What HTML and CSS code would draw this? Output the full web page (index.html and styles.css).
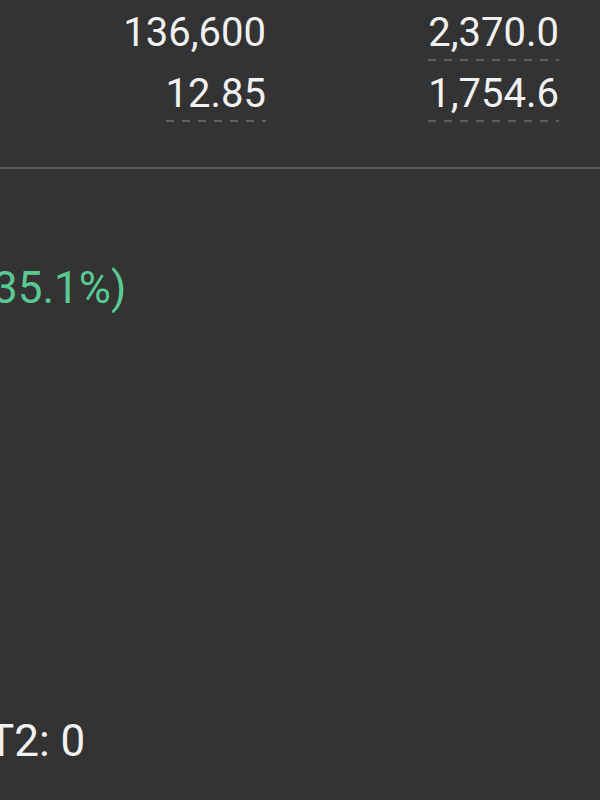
FILE: index.html
```html
<!DOCTYPE html>
<html lang="en">
<head>
    <meta charset="UTF-8">
    <meta name="viewport" content="width=device-width, initial-scale=1.0">
    <title>Position Summary</title>
    <link rel="stylesheet" href="styles.css">
</head>
<body>
    <div class="screen">
        <!-- Figures table -->
        <div class="figures">
            <div class="figure-row first">
                <span class="cell"><span class="value">136,600</span></span>
                <span class="cell"><span class="value dotted">2,370.0</span></span>
            </div>
            <div class="figure-row">
                <span class="cell"><span class="value dotted">12.85</span></span>
                <span class="cell"><span class="value dotted">1,754.6</span></span>
            </div>
        </div>

        <div class="divider"></div>

        <!-- Change line -->
        <div class="change">(35.1%)</div>

        <!-- Footer counter -->
        <div class="counter">T2: 0</div>
    </div>
</body>
</html>
```

FILE: styles.css
```css
/* Basic Reset */
* {
    margin: 0;
    padding: 0;
    box-sizing: border-box;
}

body {
    background-color: #333333;
    color: #f1f1f1;
    font-family: Roboto, 'Noto Sans', sans-serif;
    overflow: hidden;
}

.screen {
    width: 600px;
    height: 800px;
    display: flex;
    flex-direction: column;
}

/* Figures */
.figures {
    display: flex;
    flex-direction: column;
    gap: 9px;
    padding-top: 9px;
}

.figure-row {
    display: grid;
    grid-template-columns: 266px 293px;
}

.cell {
    text-align: right;
}

.value {
    display: inline-block;
    font-size: 40px;
    line-height: 48px;
    padding-bottom: 4px;
}

.value.dotted {
    background: linear-gradient(to right, #5e5e5e 50%, transparent 50%) left bottom / 16px 2px repeat-x;
}

.divider {
    height: 2px;
    background-color: #575757;
    margin-top: 45px;
}

/* Change */
.change {
    font-size: 44px;
    line-height: 52px;
    color: #5ac893;
    margin-top: 93px;
    margin-left: -22px;
    white-space: nowrap;
}

.counter {
    font-size: 44px;
    line-height: 52px;
    margin-top: auto;
    margin-bottom: 33px;
    margin-left: -12px;
    white-space: nowrap;
}
```
